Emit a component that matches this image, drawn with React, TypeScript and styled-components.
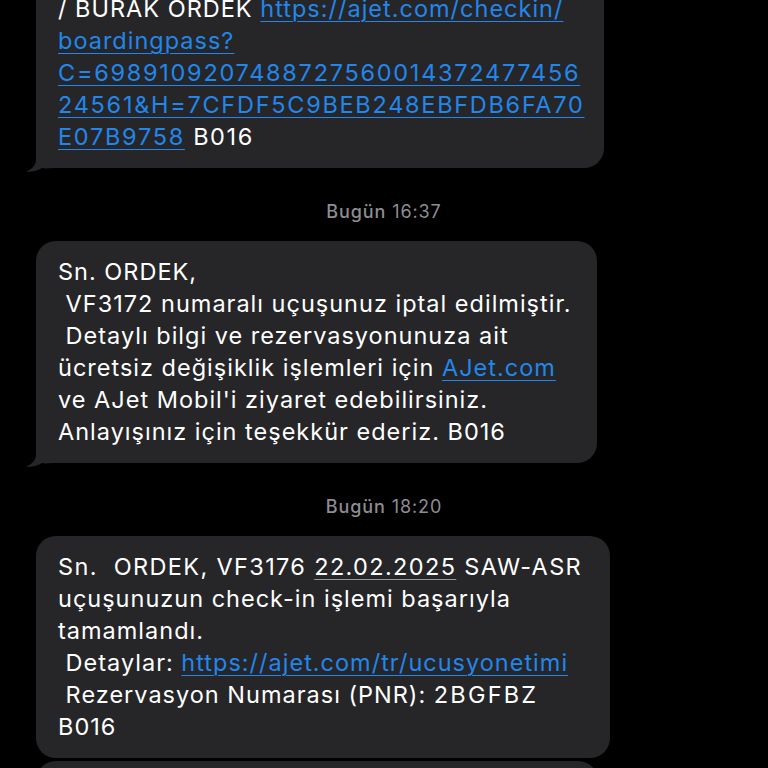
import React from 'react';
import styled, { createGlobalStyle } from 'styled-components';

const GlobalStyle = createGlobalStyle`
	html, body {
		margin: 0;
		padding: 0;
		background: #000000;
		overflow: hidden;
	}
	#root {
		height: 768px;
		overflow: hidden;
	}
`;

const Screen = styled.div`
	height: 768px;
	overflow: hidden;
	background-color: #000000;
	font-family: Inter, 'Noto Sans', 'DejaVu Sans', sans-serif;
	-webkit-font-smoothing: antialiased;
`;

const Thread = styled.div`
	display: flex;
	flex-direction: column;
	align-items: flex-start;
	margin-top: -22px;
`;

const Stamp = styled.div`
	align-self: center;
	margin: 35px 0 20px;
	font-size: 18px;
	line-height: 18px;
	color: #8d8d92;
	letter-spacing: 0.9px;
	b {
		font-weight: 500;
	}
`;

const Bubble = styled.div<{ $width: number; $gap?: number }>`
	position: relative;
	box-sizing: border-box;
	width: ${(p) => p.$width}px;
	margin: ${(p) => p.$gap ?? 0}px 0 0 36px;
	padding: 15px 0 15px 22px;
	background-color: #262628;
	border-radius: 20px;
`;

const Body = styled.div`
	white-space: pre;
	color: #ffffff;
	font-size: 23.5px;
	line-height: 32px;
	letter-spacing: 1px;
`;

const Link = styled.span`
	color: #2187ec;
	text-decoration: underline;
	text-decoration-thickness: 1px;
	text-underline-offset: 4px;
`;

// digit and capital runs: SF is wider there than Inter
const Wide = styled.span<{ $spacing: number }>`
	letter-spacing: ${(p) => p.$spacing}px;
`;

const Detected = styled.span`
	text-decoration: underline;
	text-decoration-color: #9a9a9e;
	text-decoration-thickness: 1px;
	text-underline-offset: 4px;
`;

const TailSvg = styled.svg`
	position: absolute;
	left: -10px;
	bottom: -4px;
`;

const Tail = () => (
	<TailSvg width="30" height="26" viewBox="0 0 30 26">
		<path
			d="M10 0 V14 C10 19 6 23 0 26 C6 26 12 24.5 16 22 C19 23 23 22 30 22 V0 Z"
			fill="#262628"
		/>
	</TailSvg>
);

const App = () => {
	return (
		<>
			<GlobalStyle />
			<Screen>
				<Thread>
					<Bubble $width={568}>
						<Body>
							{'/ BURAK ORDEK '}
							<Link>
								{'https://ajet.com/checkin/\nboardingpass?\n'}
								<Wide $spacing={1.72}>{'C=6989109207488727560014372477456\n24561&H=7CFDF5C9BEB248EBFDB6FA70\nE07B9758'}</Wide>
							</Link>
							<Wide $spacing={1.6}>{' B016'}</Wide>
						</Body>
						<Tail />
					</Bubble>

					<Stamp>
						<b>Bugün</b> 16:37
					</Stamp>

					<Bubble $width={561}>
						<Body>
							{'Sn. ORDEK,\n VF3172 numaralı uçuşunuz iptal edilmiştir.\n Detaylı bilgi ve rezervasyonunuza ait\nücretsiz değişiklik işlemleri için '}
							<Link>AJet.com</Link>
							{"\nve AJet Mobil'i ziyaret edebilirsiniz.\nAnlayışınız için teşekkür ederiz. B016"}
						</Body>
						<Tail />
					</Bubble>

					<Stamp>
						<b>Bugün</b> 18:20
					</Stamp>

					<Bubble $width={574}>
						<Body>
							<Wide $spacing={1.35}>
								{'Sn.  ORDEK, VF3176 '}
								<Detected>22.02.2025</Detected>
								{' SAW-ASR'}
							</Wide>
							{'\nuçuşunuzun check-in işlemi başarıyla\ntamamlandı.\n Detaylar: '}
							<Link>https://ajet.com/tr/ucusyonetimi</Link>
							{'\n Rezervasyon Numarası (PNR): '}
							<Wide $spacing={2.2}>2BGFBZ</Wide>
							{'\nB016'}
						</Body>
					</Bubble>

					<Bubble $width={562} $gap={3}>
						<Body>{'Sn. ORDEK, iyi uçuşlar dileriz. B016'}</Body>
						<Tail />
					</Bubble>
				</Thread>
			</Screen>
		</>
	);
};

export default App;
